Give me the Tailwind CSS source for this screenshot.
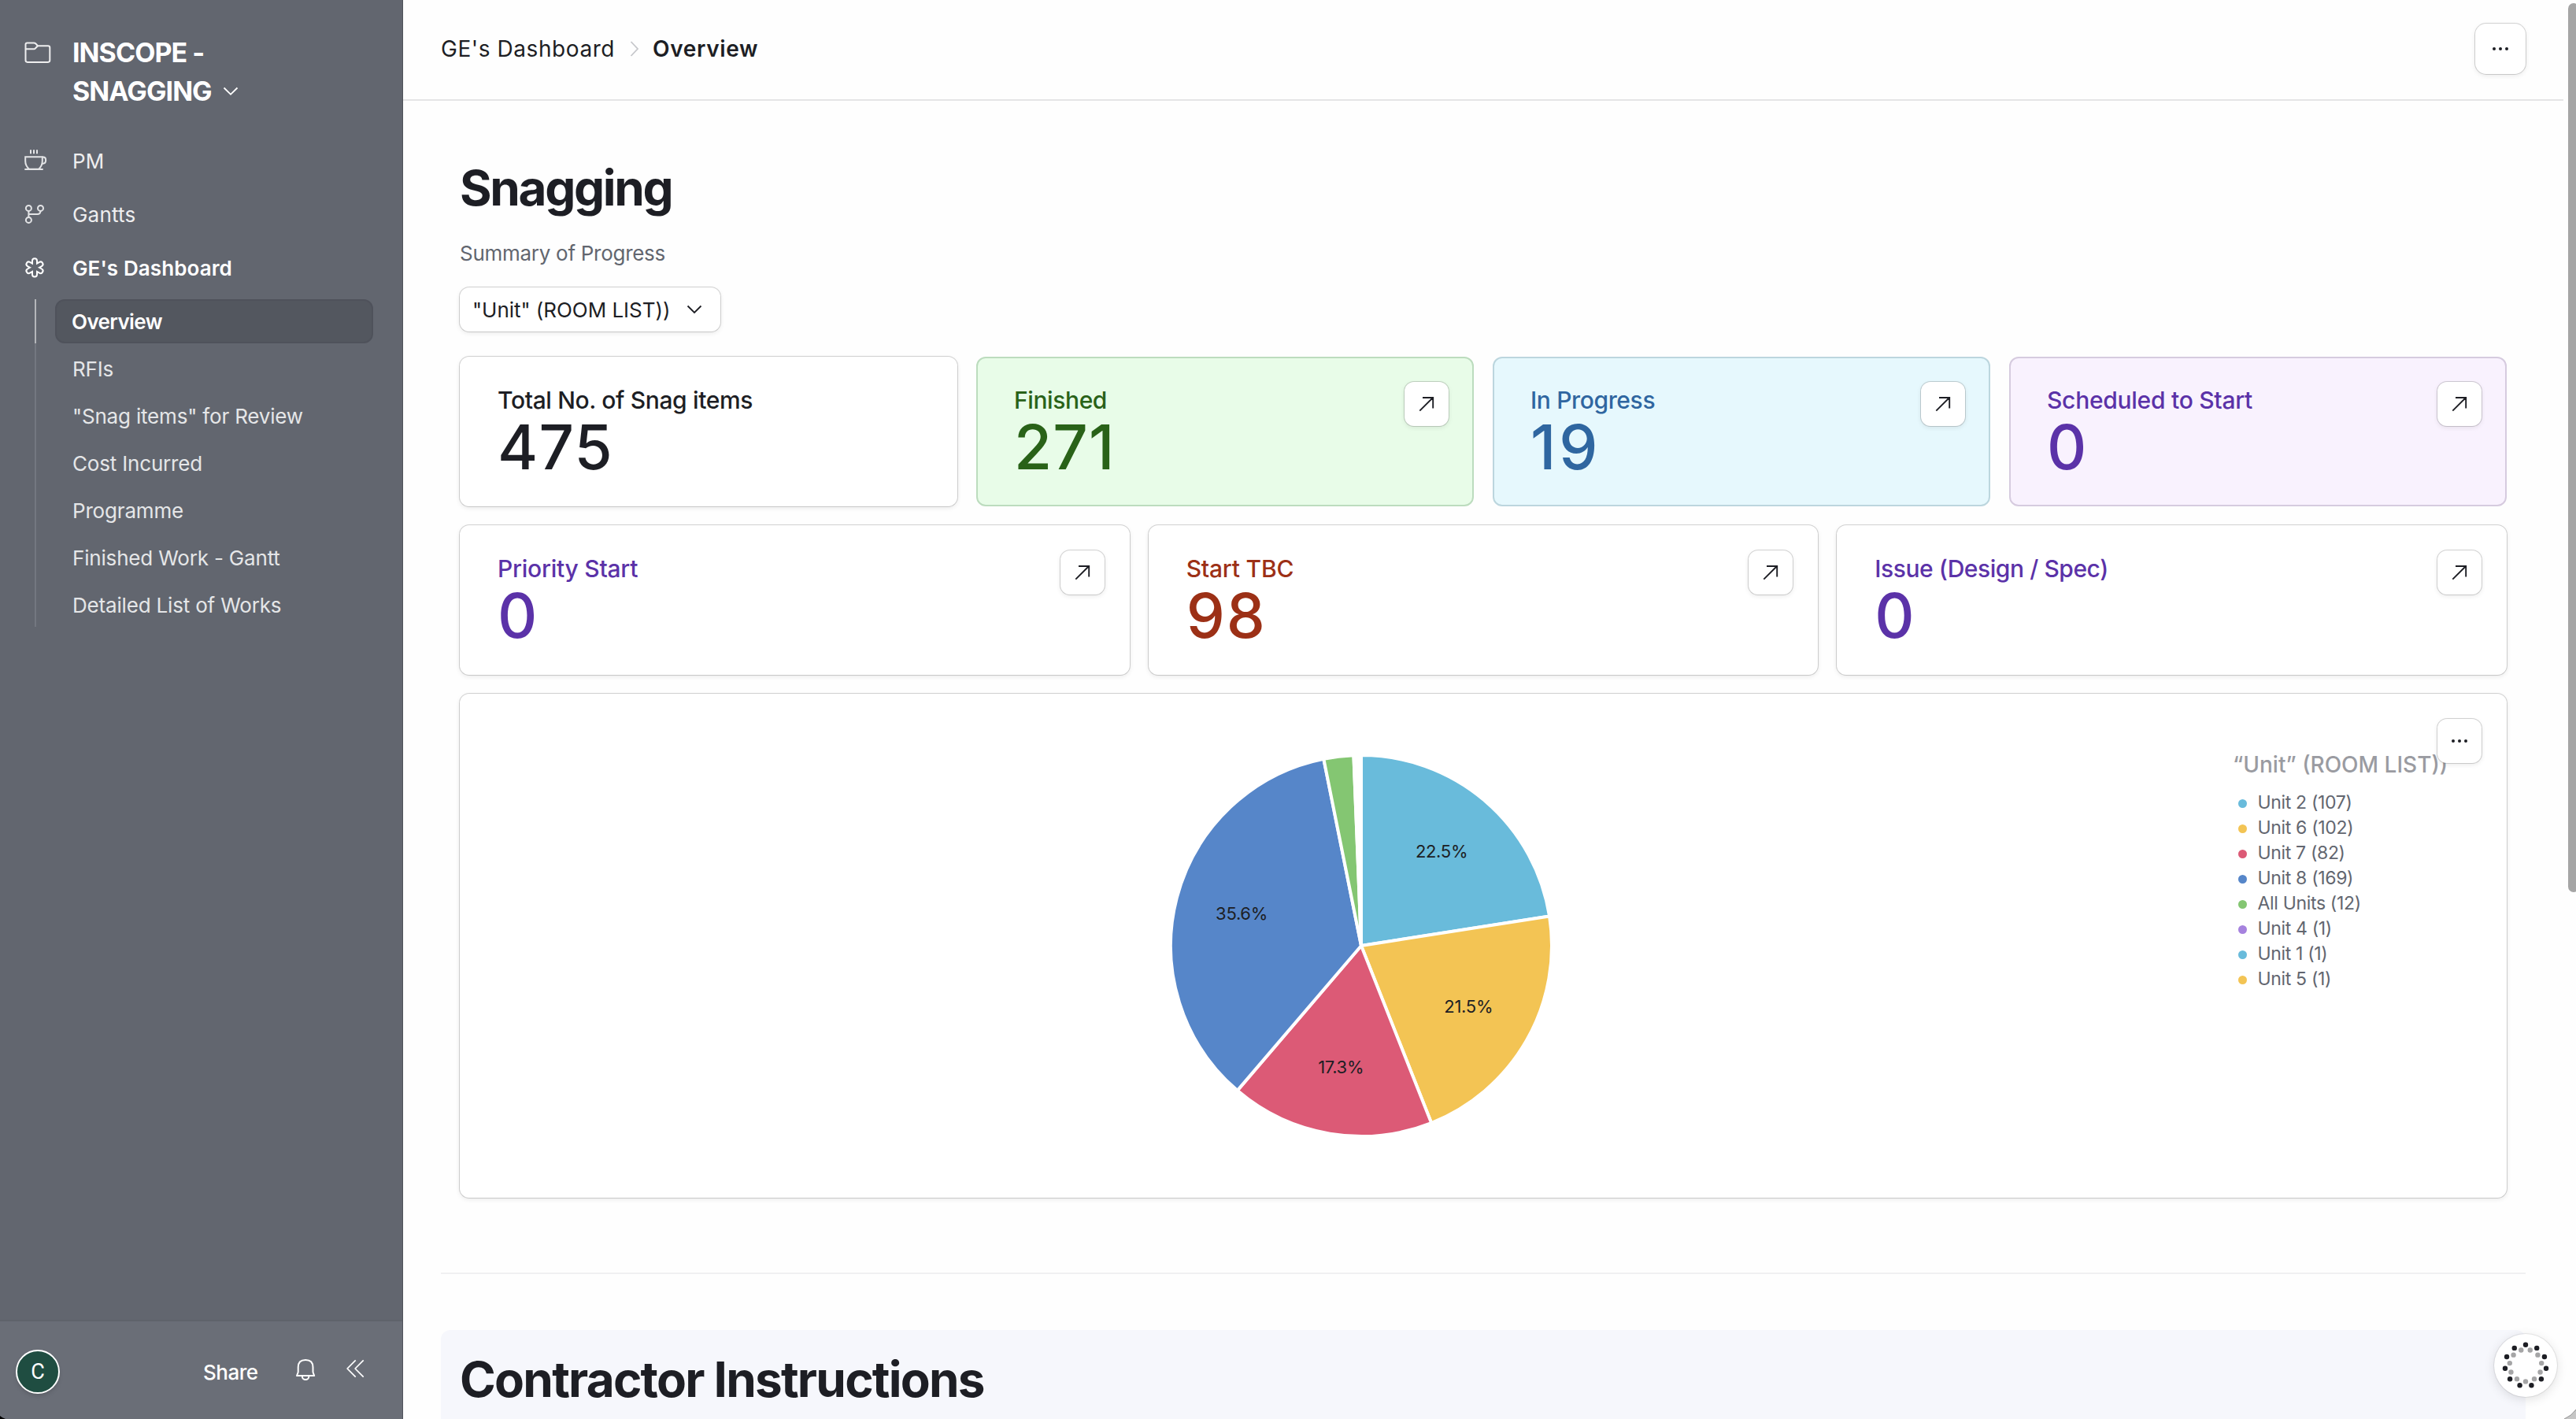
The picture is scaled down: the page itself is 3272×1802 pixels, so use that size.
<!DOCTYPE html>
<html lang="en">
<head>
  <meta charset="UTF-8" />
  <meta name="viewport" content="width=device-width, initial-scale=1.0"/>
  <title>INSCOPE - SNAGGING</title>
  <script src="https://cdn.jsdelivr.net/npm/@tailwindcss/browser@4"></script>
</head>
<body class="relative w-[3272px] h-[1802px] overflow-hidden flex bg-[#fefefe] text-[#1d1e24] font-[Inter,sans-serif]">

  <!-- Sidebar -->
  <aside class="w-[512px] h-full shrink-0 flex flex-col bg-[#62666f] text-white border-r border-[#50535b]">
    <div class="flex pt-[42px] h-[170px]">
      <svg class="w-[60px] h-[49px] mx-4 shrink-0" viewBox="16 42 60 49" fill="none" stroke="#eeeeef" stroke-width="2" stroke-linejoin="round">
        <path d="M34.5 54.4H43q1.3 0 2.2.9l2.8 3H61q2.3 0 2.3 2.3v16q0 2.3-2.3 2.3H34.8q-2.3 0-2.3-2.3V56.5q0-2.1 2-2.1z"/>
        <path d="M32.5 62.2h10.7q1 0 1.8-.9l3-3"/>
      </svg>
      <div class="text-[34px] leading-[49px] font-bold tracking-[-0.93px]">
        <div>INSCOPE -</div>
        <div class="flex items-center">SNAGGING
          <svg class="w-5 h-3 ml-[14px]" viewBox="0 0 20 12" fill="none" stroke="#fff" stroke-width="1.8"><path d="M1.5 1.5l8.5 8.3 8.5-8.3"/></svg>
        </div>
      </div>
    </div>

    <nav class="text-[26px]">
      <a class="flex items-center h-[68px] text-[#eeeeef]">
        <svg class="w-[60px] h-[68px] mx-4" viewBox="16 170 60 68" fill="none" stroke="#e3e4e6" stroke-width="2">
          <path d="M39 190.3v5M43 190.3v5M47 190.3v5M31.3 215h23.4"/>
          <path d="M32.2 199.3h21.600v5.200q0 6-4.600 10.300H37q-4.800-4.300-4.800-10.300z"/>
          <path d="M53.8 199.500h1.200a3.300 3.300 0 0 1 3.100 3.400v1.200q0 3.800-4.900 4"/>
        </svg>
        <span class="tracking-[0.1px]">PM</span>
      </a>
      <a class="flex items-center h-[68px] text-[#eeeeef]">
        <svg class="w-[60px] h-[68px] mx-4" viewBox="16 238 60 68" fill="none" stroke="#e3e4e6" stroke-width="2">
          <circle cx="36.4" cy="264.4" r="3.500"/><circle cx="51.5" cy="264.4" r="3.500"/><circle cx="36.4" cy="279.4" r="3.500"/>
          <path d="M36.4 268v8M51.500 268q-.2 4-4 4H36.400"/>
        </svg>
        <span class="tracking-[0.2px]">Gantts</span>
      </a>
      <a class="flex items-center h-[68px]">
        <svg class="w-[60px] h-[68px] mx-4" viewBox="16 306 60 68" fill="none" stroke-linecap="round">
          <path stroke="#fff" stroke-width="8" d="M44 331.200v17.200M36.500 335.500l15 8.600M51.500 335.500l-15 8.600"/>
          <path stroke="#62666f" stroke-width="4" d="M44 331.200v17.200M36.500 335.500l15 8.600M51.500 335.500l-15 8.600"/>
        </svg>
        <span class="font-semibold tracking-[0.1px]">GE's Dashboard</span>
      </a>

      <div class="flex mt-1.5 ml-[44px]">
        <div class="w-0.5 bg-[#737780]"><div class="h-14 bg-[#b4b6ba]"></div></div>
        <div class="ml-6 w-[404px] flex flex-col gap-1 text-[#e5e6e8] tracking-[-0.18px]">
          <a class="h-14 flex items-center pl-[19px] rounded-xl bg-[#53575f] border-2 border-[#4f525b] text-white font-semibold tracking-[-0.6px]">Overview</a>
          <a class="h-14 flex items-center pl-[22px]">RFIs</a>
          <a class="h-14 flex items-center pl-[22px]">"Snag items" for Review</a>
          <a class="h-14 flex items-center pl-[22px]">Cost Incurred</a>
          <a class="h-14 flex items-center pl-[22px]">Programme</a>
          <a class="h-14 flex items-center pl-[22px]">Finished Work - Gantt</a>
          <a class="h-14 flex items-center pl-[22px]">Detailed List of Works</a>
        </div>
      </div>
    </nav>

    <div class="mt-auto h-[126px] flex items-center pt-[4px] pl-5 bg-[#6a6e77] border-t-2 border-[#5f636b]">
      <div class="w-14 h-14 rounded-full bg-[#1f4d41] border-2 border-white shadow-md flex items-center justify-center text-[27px] font-[Roboto,sans-serif]">C</div>
      <span class="ml-[182px] text-[26px] font-medium tracking-[-0.5px]">Share</span>
      <svg class="w-[100px] h-10 ml-[44px] mt-[-4px]" viewBox="372 1720 100 40" fill="none" stroke="#fff" stroke-width="2" stroke-linejoin="round">
        <path d="M377 1747h22.200l-1.700-4.500v-6.200q0-9.300-9.400-9.300t-9.400 9.300v6.200z"/>
        <path d="M383.800 1747.500a4.300 4.600 0 0 0 8.600 0"/>
        <path stroke-width="1.7" d="M451.700 1727.300l-10.600 10.700 10.600 10.700M461.700 1727.300l-10.600 10.700 10.600 10.700"/>
      </svg>
    </div>
  </aside>

  <main class="w-[2760px] h-full flex flex-col">
    <!-- Breadcrumbs -->
    <header class="w-[2744px] h-32 shrink-0 flex items-center pb-0.5 px-12 border-b-2 border-[#e5e5e6] text-[28px]">
      <span class="tracking-[0.56px]">GE's Dashboard</span>
      <svg class="w-3 h-5 ml-[19px] mr-[17px]" viewBox="0 0 12 20" fill="none" stroke="#c6c7cb" stroke-width="1.8"><path d="M1.5 1l8.500 9-8.500 9"/></svg>
      <span class="font-semibold tracking-[0.65px]">Overview</span>
      <button class="ml-auto w-16 h-16 rounded-[14px] bg-white flex items-center justify-center gap-1 shadow-[0_0_0_1px_rgba(0,0,0,0.16),0_2px_6px_rgba(0,0,0,0.09)]">
        <i class="w-1 h-1 rounded-full bg-[#1d1e24]"></i><i class="w-1 h-1 rounded-full bg-[#1d1e24]"></i><i class="w-1 h-1 rounded-full bg-[#1d1e24]"></i>
      </button>
    </header>

    <section class="w-[2600px] ml-[72px] mt-[75px]">
      <h1 class="h-[72px] text-[62px] leading-[72px] font-bold tracking-[-2.35px]">Snagging</h1>
      <p class="h-10 mt-[27px] text-[26px] leading-10 tracking-[-0.28px] text-[#62666f]">Summary of Progress</p>
      <button class="mt-[23px] h-14 w-[331px] flex items-center pl-4 rounded-xl bg-white text-[26px] shadow-[0_0_0_1px_rgba(0,0,0,0.16),0_2px_6px_rgba(0,0,0,0.09)]">
        <span class="tracking-[-0.03px]">"Unit" (ROOM LIST))</span>
        <svg class="w-5 h-3 ml-[21px]" viewBox="0 0 20 12" fill="none" stroke="#1d1e24" stroke-width="1.8"><path d="M1.5 1.5l8.500 8.500 8.500-8.500"/></svg>
      </button>

      <!-- Status cards -->
      <div class="mt-8 grid grid-cols-4 gap-6">
        <div class="h-[190px] rounded-xl bg-white pl-12 pt-[37px] shadow-[0_0_0_1px_rgba(0,0,0,0.16),0_2px_6px_rgba(0,0,0,0.09)]">
          <div class="text-[30px] leading-9 font-medium tracking-[-0.36px]">Total No. of Snag items</div>
          <div class="text-[78px] leading-[84px] font-medium tracking-[1.2px]">475</div>
        </div>
        <div class="h-[190px] rounded-xl bg-[#e8fce8] border-2 border-[#bcdcbe] flex justify-between pl-[46px] pt-[30px] pr-[30px] text-[#296218]">
          <div class="pt-[5px]">
            <div class="text-[30px] leading-9 font-medium tracking-[-0.4px]">Finished</div>
            <div class="text-[78px] leading-[84px] font-medium tracking-[1.2px]">271</div>
          </div>
          <button class="link w-14 h-14 rounded-xl bg-white flex items-center justify-center shadow-[0_0_0_1px_rgba(0,0,0,0.16),0_2px_6px_rgba(0,0,0,0.09)]"></button>
        </div>
        <div class="h-[190px] rounded-xl bg-[#e6f8fd] border-2 border-[#bcd6de] flex justify-between pl-[46px] pt-[30px] pr-[30px] text-[#2f66a0]">
          <div class="pt-[5px]">
            <div class="text-[30px] leading-9 font-medium tracking-[-0.36px]">In Progress</div>
            <div class="text-[78px] leading-[84px] font-medium tracking-[4px]">19</div>
          </div>
          <button class="link w-14 h-14 rounded-xl bg-white flex items-center justify-center shadow-[0_0_0_1px_rgba(0,0,0,0.16),0_2px_6px_rgba(0,0,0,0.09)]"></button>
        </div>
        <div class="h-[190px] rounded-xl bg-[#f9f2fe] border-2 border-[#d6cbdf] flex justify-between pl-[46px] pt-[30px] pr-[30px] text-[#5b32a8]">
          <div class="pt-[5px]">
            <div class="text-[30px] leading-9 font-medium tracking-[-0.27px]">Scheduled to Start</div>
            <div class="text-[78px] leading-[84px] font-medium">0</div>
          </div>
          <button class="link w-14 h-14 rounded-xl bg-white flex items-center justify-center shadow-[0_0_0_1px_rgba(0,0,0,0.16),0_2px_6px_rgba(0,0,0,0.09)]"></button>
        </div>
      </div>

      <div class="mt-6 grid grid-cols-3 gap-6">
        <div class="h-[190px] rounded-xl bg-white flex justify-between pl-12 pt-8 pr-8 text-[#5b32a8] shadow-[0_0_0_1px_rgba(0,0,0,0.16),0_2px_6px_rgba(0,0,0,0.09)]">
          <div class="pt-[5px]">
            <div class="text-[30px] leading-9 font-medium tracking-[-0.25px]">Priority Start</div>
            <div class="text-[78px] leading-[84px] font-medium">0</div>
          </div>
          <button class="link w-14 h-14 rounded-xl bg-white flex items-center justify-center shadow-[0_0_0_1px_rgba(0,0,0,0.16),0_2px_6px_rgba(0,0,0,0.09)]"></button>
        </div>
        <div class="h-[190px] rounded-xl bg-white flex justify-between pl-12 pt-8 pr-8 text-[#9c3016] shadow-[0_0_0_1px_rgba(0,0,0,0.16),0_2px_6px_rgba(0,0,0,0.09)]">
          <div class="pt-[5px]">
            <div class="text-[30px] leading-9 font-medium tracking-[-0.2px]">Start TBC</div>
            <div class="text-[78px] leading-[84px] font-medium tracking-[2px]">98</div>
          </div>
          <button class="link w-14 h-14 rounded-xl bg-white flex items-center justify-center shadow-[0_0_0_1px_rgba(0,0,0,0.16),0_2px_6px_rgba(0,0,0,0.09)]"></button>
        </div>
        <div class="h-[190px] rounded-xl bg-white flex justify-between pl-12 pt-8 pr-8 text-[#5b32a8] shadow-[0_0_0_1px_rgba(0,0,0,0.16),0_2px_6px_rgba(0,0,0,0.09)]">
          <div class="pt-[5px]">
            <div class="text-[30px] leading-9 font-medium tracking-[-0.44px]">Issue (Design / Spec)</div>
            <div class="text-[78px] leading-[84px] font-medium">0</div>
          </div>
          <button class="link w-14 h-14 rounded-xl bg-white flex items-center justify-center shadow-[0_0_0_1px_rgba(0,0,0,0.16),0_2px_6px_rgba(0,0,0,0.09)]"></button>
        </div>
      </div>

      <!-- Pie chart -->
      <div class="relative mt-6 h-[640px] rounded-xl bg-white flex shadow-[0_0_0_1px_rgba(0,0,0,0.16),0_2px_6px_rgba(0,0,0,0.09)]">
        <div class="w-[2250px] pl-10 flex items-center justify-center">
          <svg id="pie" class="w-[500px] h-[500px]" viewBox="-250 -250 500 500"></svg>
        </div>
        <div class="pt-[73px] pl-0.5">
          <div class="h-[34px] leading-[34px] text-[28px] font-medium text-[#9a9ba1] whitespace-nowrap">“Unit” (ROOM LIST))</div>
          <ul id="legend" class="mt-[15px]"></ul>
        </div>
        <button class="absolute right-8 top-8 w-14 h-14 rounded-xl bg-white flex items-center justify-center gap-1 shadow-[0_0_0_1px_rgba(0,0,0,0.16),0_2px_6px_rgba(0,0,0,0.09)]">
          <i class="w-1 h-1 rounded-full bg-[#1d1e24]"></i><i class="w-1 h-1 rounded-full bg-[#1d1e24]"></i><i class="w-1 h-1 rounded-full bg-[#1d1e24]"></i>
        </button>
      </div>
    </section>

    <div class="w-[2648px] h-0.5 shrink-0 ml-12 mt-[95px] bg-[#f0f0f2]"></div>

    <section class="w-[2648px] grow ml-12 mt-[71px] pl-6 pt-[27px] rounded-t-xl bg-[#f6f7fc]">
      <h1 class="text-[62px] leading-[72px] font-bold tracking-[-1.78px]">Contractor Instructions</h1>
    </section>
  </main>

  <!-- Scrollbar -->
  <div class="absolute left-[3262px] top-1 w-3.5 h-[1129px] rounded-full bg-[#a5a5a5]"></div>

  <!-- Help button -->
  <div class="absolute left-[3168px] top-[1694px] w-20 h-20 rounded-full bg-white shadow-[0_0_0_1px_rgba(0,0,0,0.08),0_3px_14px_rgba(0,0,0,0.12)]">
    <svg id="help" class="w-20 h-20" viewBox="-40 -40 80 80"></svg>
  </div>

  <!-- Window corners -->
  <svg class="absolute left-0 bottom-0 w-2 h-1" viewBox="0 0 8 4"><path d="M0 0q3 2.800 7 4H0z" fill="#000"/></svg>
  <svg class="absolute right-0 bottom-0 w-4 h-3" viewBox="0 0 16 12"><path d="M16 0Q10.500 8 1 12h15z" fill="#c6c6c6"/><path d="M16 0Q10.500 8 1 12" fill="none" stroke="#909090"/></svg>

  <script>
    const units = [
      { name: "Unit 2", count: 107, color: "#69bbdb" },
      { name: "Unit 6", count: 102, color: "#f3c454" },
      { name: "Unit 7", count: 82, color: "#dc5a76" },
      { name: "Unit 8", count: 169, color: "#5686c9" },
      { name: "All Units", count: 12, color: "#84c672" },
      { name: "Unit 4", count: 1, color: "#a682de" },
      { name: "Unit 1", count: 1, color: "#69bbdb" },
      { name: "Unit 5", count: 1, color: "#f3c454" }
    ];
    const total = units.reduce((sum, u) => sum + u.count, 0);
    const R = 242;
    const point = (a, r) => (Math.sin(a) * r).toFixed(2) + " " + (-Math.cos(a) * r).toFixed(2);

    let angle = 0, slices = "", labels = "";
    units.forEach(u => {
      const next = angle + u.count / total * Math.PI * 2;
      slices += `<path d="M0 0L${point(angle, R)}A${R} ${R} 0 0 1 ${point(next, R)}Z" fill="${u.color}" stroke="#fff" stroke-width="4" stroke-linejoin="round"/>`;
      // only the larger slices have room for a label
      if (u.count / total > 0.05) {
        const mid = (angle + next) / 2;
        labels += `<text x="${Math.sin(mid) * 157}" y="${-Math.cos(mid) * 157 + 7}" text-anchor="middle" class="text-[22px] tracking-[-0.3px] fill-[#1d1e24]">${(u.count / total * 100).toFixed(1)}%</text>`;
      }
      angle = next;
    });
    document.getElementById("pie").innerHTML = slices + labels;

    document.getElementById("legend").innerHTML = units.map(u => `
      <li class="h-8 flex items-center pl-[6.5px] text-[23px] tracking-[-0.33px] text-[#62666f]">
        <i class="w-[11px] h-[11px] rounded-full mt-[2px]" style="background:${u.color}"></i>
        <span class="ml-[14px]">${u.name} (${u.count})</span>
      </li>`).join("");

    document.querySelectorAll(".link").forEach(b => {
      b.innerHTML = `<svg class="w-5 h-5" viewBox="0 0 20 20" fill="none" stroke="#1d1e24" stroke-width="1.9"><path d="M1.3 18.700L18 2M5 2h13.200v13.500"/></svg>`;
    });

    let dots = "";
    for (let i = 0; i < 11; i++) {
      const a = i * Math.PI * 2 / 11;
      const [x, y] = point(a, 26.3).split(" "), [ix, iy] = point(a + Math.PI, 20.4).split(" ");
      dots += `<circle cx="${x}" cy="${y}" r="3.2" fill="#1d1e24"/><circle cx="${ix}" cy="${iy}" r="3.2" fill="#a5a5a6"/>`;
    }
    document.getElementById("help").innerHTML = dots;
  </script>
</body>
</html>
